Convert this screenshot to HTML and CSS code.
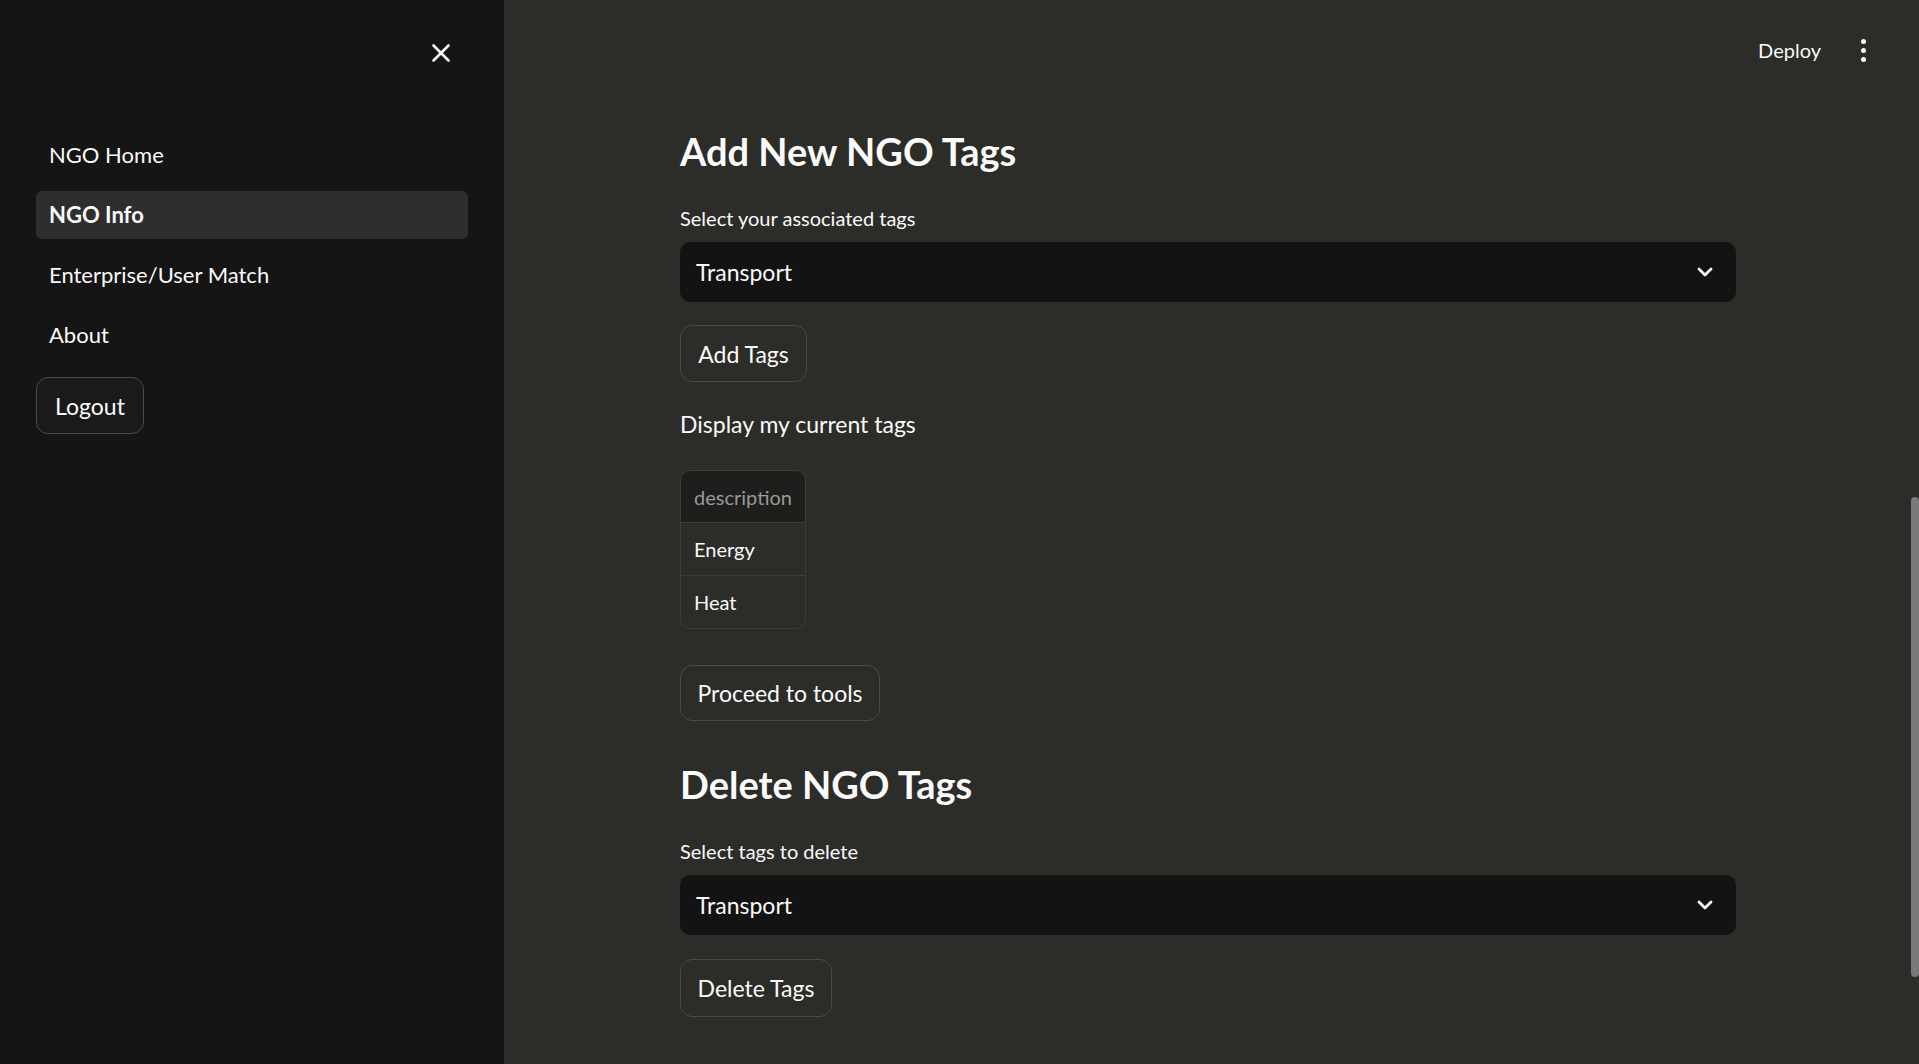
FILE: index.html
```html
<!DOCTYPE html>
<html lang="en">
<head>
<meta charset="utf-8">
<title>NGO Info</title>
<link rel="stylesheet" href="styles.css">
</head>
<body>
<div class="app">
  <aside class="sidebar">
    <div class="sidebar-head">
      <button class="close-btn" aria-label="Close sidebar">
        <svg width="22" height="22" viewBox="0 0 22 22"><path d="M3.5 3.5 L18.5 18.5 M18.5 3.5 L3.5 18.5" stroke="#fafafa" stroke-width="2.6" stroke-linecap="round" fill="none"/></svg>
      </button>
    </div>
    <nav class="nav">
      <a class="nav-item">NGO Home</a>
      <a class="nav-item active">NGO Info</a>
      <a class="nav-item">Enterprise/User Match</a>
      <a class="nav-item">About</a>
    </nav>
    <button class="btn logout">Logout</button>
  </aside>
  <main class="main">
    <header class="topbar">
      <span class="deploy">Deploy</span>
      <span class="kebab"><i></i><i></i><i></i></span>
    </header>
    <div class="content">
      <h3 class="title">Add New NGO Tags</h3>
      <label class="label">Select your associated tags</label>
      <div class="select">
        <span>Transport</span>
        <svg class="chev" width="20" height="20" viewBox="0 0 20 20"><path d="M4 7 L10 13 L16 7" stroke="#fafafa" stroke-width="2.8" fill="none" stroke-linecap="round" stroke-linejoin="round"/></svg>
      </div>
      <button class="btn add-btn">Add Tags</button>
      <p class="text">Display my current tags</p>
      <div class="table">
        <div class="cell head">description</div>
        <div class="cell">Energy</div>
        <div class="cell">Heat</div>
      </div>
      <button class="btn proceed-btn">Proceed to tools</button>
      <h3 class="title title-delete">Delete NGO Tags</h3>
      <label class="label">Select tags to delete</label>
      <div class="select">
        <span>Transport</span>
        <svg class="chev" width="20" height="20" viewBox="0 0 20 20"><path d="M4 7 L10 13 L16 7" stroke="#fafafa" stroke-width="2.8" fill="none" stroke-linecap="round" stroke-linejoin="round"/></svg>
      </div>
      <button class="btn del-btn">Delete Tags</button>
    </div>
    <div class="scrollbar"></div>
  </main>
</div>
</body>
</html>
```
FILE: styles.css
```css
* { box-sizing: border-box; }
html, body {
  margin: 0;
  height: 100%;
  overflow: hidden;
}
body {
  font-family: Lato, "Noto Sans", sans-serif;
  color: #fafafa;
  background: #2c2c28;
}
.app {
  display: flex;
  height: 100vh;
}
.sidebar {
  width: 504px;
  flex: none;
  background: #151515;
  display: flex;
  flex-direction: column;
  align-items: flex-start;
  padding: 0 36px;
}
.sidebar-head {
  height: 131px;
  width: 100%;
  display: flex;
  justify-content: flex-end;
  padding-top: 33px;
  padding-right: 7px;
}
.close-btn {
  background: none;
  border: 0;
  padding: 0;
  width: 40px;
  height: 40px;
  display: flex;
  align-items: center;
  justify-content: center;
}
.nav {
  display: flex;
  flex-direction: column;
  gap: 12px;
  width: 100%;
}
.nav-item {
  height: 48px;
  display: flex;
  align-items: center;
  padding-left: 13px;
  font-size: 22px;
  border-radius: 6px;
  color: #fafafa;
  padding-bottom: 1px;
}
.nav-item.active {
  background: #2e2e2e;
  font-weight: 700;
}
.btn {
  font-family: inherit;
  color: #fafafa;
  background: #2c2c28;
  border: 1px solid #4a4a46;
  border-radius: 12px;
  font-size: 23px;
  height: 57px;
  padding: 0 18px;
  cursor: pointer;
}
.logout {
  margin-top: 18px;
  width: 108px;
  background: #1a1a1a;
  padding: 0;
}
.main {
  flex: 1;
  position: relative;
  padding-left: 176px;
}
.topbar {
  position: absolute;
  top: 0;
  right: 0;
  height: 100px;
  display: flex;
  align-items: center;
  gap: 40px;
  padding-right: 53px;
}
.deploy {
  font-size: 20px;
}
.kebab {
  display: flex;
  flex-direction: column;
  gap: 4px;
}
.kebab i {
  width: 5px;
  height: 5px;
  border-radius: 50%;
  background: #fafafa;
}
.content {
  width: 1056px;
  display: flex;
  flex-direction: column;
  align-items: flex-start;
  padding-top: 121px;
}
.title {
  margin: 0;
  font-size: 38px;
  font-weight: 700;
  line-height: 60px;
  height: 60px;
}
.title-delete {
  margin-top: 33px;
}
.label {
  margin-top: 25px;
  font-size: 20px;
  line-height: 24px;
}
.select {
  margin-top: 12px;
  width: 100%;
  height: 60px;
  background: #131313;
  border-radius: 10px;
  display: flex;
  align-items: center;
  justify-content: space-between;
  padding: 0 21px 0 16px;
  font-size: 23px;
}
.add-btn { margin-top: 23px; width: 127px; padding: 0; }
.text {
  margin: 22px 0 0;
  font-size: 23px;
  line-height: 40px;
}
.table {
  margin-top: 26px;
  width: 126px;
  border: 1px solid #3c3c39;
  border-radius: 10px;
  overflow: hidden;
}
.cell {
  height: 53px;
  display: flex;
  align-items: center;
  padding-left: 13px;
  font-size: 20px;
  border-top: 1px solid #3c3c39;
}
.cell.head {
  border-top: 0;
  height: 51px;
  background: #1e1e1c;
  color: #9a9a96;
}
.proceed-btn { margin-top: 36px; width: 200px; height: 56px; padding: 0; }
.del-btn { margin-top: 24px; width: 152px; height: 58px; padding: 0; }
.scrollbar {
  position: absolute;
  right: 0;
  top: 497px;
  width: 8px;
  height: 480px;
  background: #7a7a7a;
  border-radius: 4px;
}
```
